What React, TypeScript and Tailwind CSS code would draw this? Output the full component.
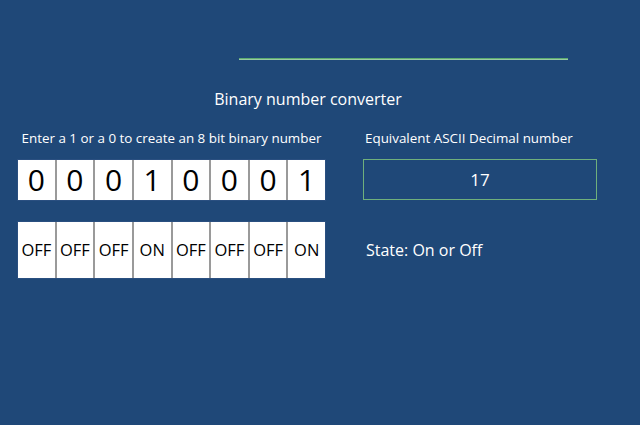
const bits = ["0", "0", "0", "1", "0", "0", "0", "1"];

export default function App() {
  const font = { fontFamily: '"Open Sans", "Liberation Sans", sans-serif' };

  return (
    <div className="flex h-[425px] w-[640px] flex-col bg-[#1f4878] text-white" style={font}>
      <div className="ml-[239px] mt-[58px] h-[2px] w-[329px] bg-gradient-to-b from-[#3c9a58] to-[#b4dcbc]" />

      <div className="mt-[29px] w-[616px] text-center text-[16px] leading-5">Binary number converter</div>

      <div className="mt-[19px] flex">
        <div className="ml-[17px] flex w-[309px] flex-col">
          <p className="text-center text-[13.4px] leading-5">Enter a 1 or a 0 to create an 8 bit binary number</p>
          <div className="mt-[11px] flex h-[42px] border border-[#2a4f80] bg-white">
            {bits.map((b, i) => (
              <div
                key={i}
                className="flex flex-1 items-center justify-center border-l-2 border-[#9a9a9a] text-[30px] leading-none text-black first:border-l-0"
              >
                {b}
              </div>
            ))}
          </div>
          <div className="mt-[20px] flex h-[58px] border border-[#2a4f80] bg-white">
            {bits.map((b, i) => (
              <div
                key={i}
                className="flex flex-1 items-center justify-center border-l-2 border-[#9a9a9a] text-[16.5px] text-black first:border-l-0"
              >
                {b === "1" ? "ON" : "OFF"}
              </div>
            ))}
          </div>
        </div>

        <div className="ml-[37px] flex w-[234px] flex-col">
          <p className="pl-[2px] text-[13.4px] leading-5">Equivalent ASCII Decimal number</p>
          <div className="mt-[11px] flex h-[41px] items-center justify-center border border-[#6fb07c] text-[17px]">
            17
          </div>
          <p className="mt-[40px] pl-[3px] text-[16px] leading-5">State: On or Off</p>
        </div>
      </div>
    </div>
  );
}
